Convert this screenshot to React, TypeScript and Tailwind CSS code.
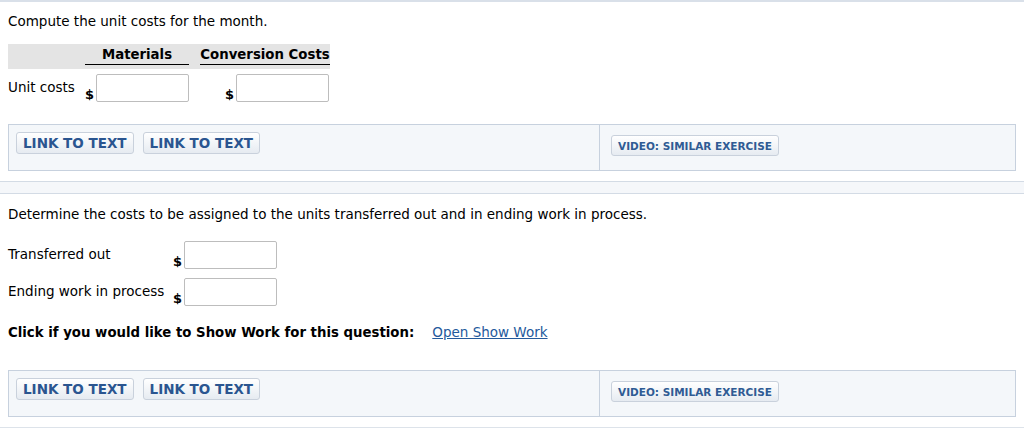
const LinkButton = ({ label }: { label: string }) => (
  <button className="h-[22px] px-[6px] pt-[2px] rounded-[3px] border border-[#c9d1dc] bg-gradient-to-b from-white to-[#e6ebf1] text-[13.5px] font-bold text-[#2a5590] leading-none">
    {label}
  </button>
);

const ResourcePanel = () => (
  <div className="mx-2 h-[47px] flex border border-[#c7d1de] bg-[#f4f7fa]">
    <div className="w-[591px] flex items-start gap-[9px] pl-[7px] pt-[7px] border-r border-[#c7d1de]">
      <LinkButton label="LINK TO TEXT" />
      <LinkButton label="LINK TO TEXT" />
    </div>
    <div className="flex-1 pl-[11px] pt-[10px]">
      <button className="h-[21px] px-[6px] pt-[1px] rounded-[3px] border border-[#c9d1dc] bg-gradient-to-b from-white to-[#e6ebf1] text-[10.5px] font-bold text-[#2f5b94] leading-none">
        VIDEO: SIMILAR EXERCISE
      </button>
    </div>
  </div>
);

const MoneyInput = () => (
  <div className="flex items-end gap-[2px]">
    <span className="text-[13px] font-bold leading-none mb-[1px]">$</span>
    <input className="w-[93px] h-[28px] border border-[#bdbdbd] rounded-[2px] bg-white" />
  </div>
);

export default function App() {
  return (
    <div className="w-[1024px] h-[430px] bg-white text-black text-[13.5px] font-['DejaVu_Sans',Verdana,sans-serif] overflow-hidden">
      <div className="h-[3px] border-t-2 border-[#d9e0e9]" />

      <div className="px-2 pt-[10px]">
        <p className="leading-[16px]">Compute the unit costs for the month.</p>

        <div className="mt-[15px] w-[322px]">
          <div className="flex bg-[#e4e4e4] h-[25px] pt-[2px] text-[13.3px] font-bold whitespace-nowrap">
            <div className="w-[77px]" />
            <div className="w-[104px] border-b border-black h-[19px] text-center leading-[17px]">
              Materials
            </div>
            <div className="w-[11px]" />
            <div className="w-[130px] border-b border-black h-[19px] text-center leading-[17px]">
              Conversion Costs
            </div>
          </div>
          <div className="flex mt-[5px]">
            <div className="w-[77px] pt-[5px] leading-[16px]">Unit costs</div>
            <MoneyInput />
            <div className="w-[36px]" />
            <MoneyInput />
          </div>
        </div>
      </div>

      <div className="mt-[22px]">
        <ResourcePanel />
      </div>

      <div className="mt-[10px] h-[13px] border-y border-[#d3dbe5] bg-[#f5f7fa]" />

      <div className="px-2 pt-[12px]">
        <p className="leading-[16px]">
          Determine the costs to be assigned to the units transferred out and in ending work in process.
        </p>

        <div className="mt-[19px] flex flex-col gap-[9px]">
          <div className="flex">
            <div className="w-[165px] pt-[5px] leading-[16px]">Transferred out</div>
            <MoneyInput />
          </div>
          <div className="flex">
            <div className="w-[165px] pt-[5px] leading-[16px]">Ending work in process</div>
            <MoneyInput />
          </div>
        </div>

        <p className="mt-[18px] leading-[16px]">
          <span className="font-bold text-[13.3px]">Click if you would like to Show Work for this question:</span>
          <a href="#" className="ml-[18px] text-[#245a9c] underline">
            Open Show Work
          </a>
        </p>
      </div>

      <div className="mt-[29px]">
        <ResourcePanel />
      </div>

      <div className="mt-[10px] border-t border-[#dde3ea]" />
    </div>
  );
}
